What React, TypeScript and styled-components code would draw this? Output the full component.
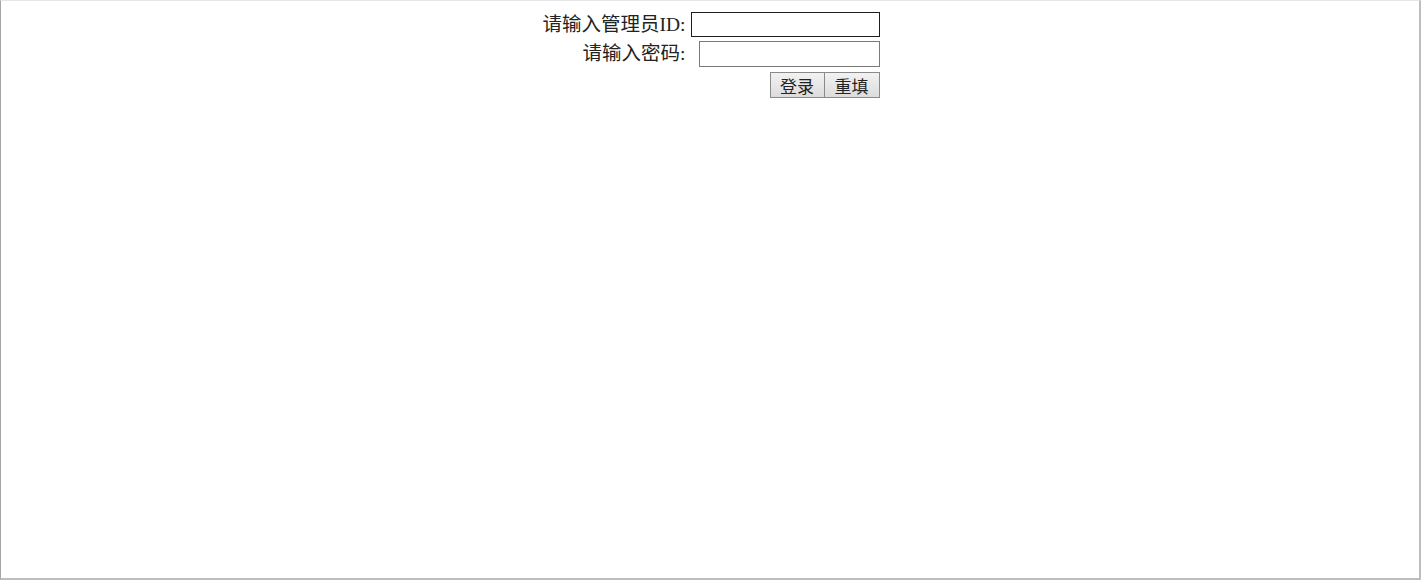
import React from 'react';
import styled, { createGlobalStyle } from 'styled-components';

const GlobalStyle = createGlobalStyle`
  html, body {
    margin: 0;
    padding: 0;
    background: #ffffff;
  }
  body {
    font-family: "Liberation Serif", "Noto Sans CJK SC", serif;
  }
`;

const Frame = styled.div`
  box-sizing: border-box;
  width: 1421px;
  height: 580px;
  border: 1px solid #a6a6a6;
  border-top-color: #e6e6e6;
  border-right-width: 2px;
  border-right-color: #bdbdbd;
  border-bottom-width: 2px;
  border-bottom-color: #bdbdbd;
  padding-top: 7px;
`;

const FormTable = styled.table`
  margin: 0 auto;
  position: relative;
  left: 1px;
  border-collapse: separate;
  border-spacing: 0 4px;
`;

const LabelCell = styled.td`
  text-align: right;
  font-size: 19.5px;
  line-height: 24px;
  color: #222;
  white-space: nowrap;
  padding: 0 5px 0 0;
  vertical-align: middle;
`;

const FieldCell = styled.td`
  text-align: right;
  padding: 0;
  line-height: 0;
  vertical-align: middle;
`;

const TextInput = styled.input<{ $wide?: boolean }>`
  box-sizing: border-box;
  display: block;
  margin-left: auto;
  width: ${(p) => (p.$wide ? '189px' : '181px')};
  height: ${(p) => (p.$wide ? '25px' : '26px')};
  border: 1px solid ${(p) => (p.$wide ? '#1e1e1e' : '#7a7a7a')};
  outline: none;
  padding: 0 2px;
  font-size: 16px;
  font-family: "Liberation Serif", "Noto Sans CJK SC", serif;
  background: #fff;
`;

const ButtonRow = styled.div`
  display: flex;
  justify-content: flex-end;
  padding-top: 1px;
`;

const FormButton = styled.button`
  box-sizing: border-box;
  width: 55px;
  height: 26px;
  padding: 0;
  border: 1px solid #8a8a8a;
  border-radius: 0;
  background: linear-gradient(#f2f2f2, #dcdcdc);
  font-size: 17px;
  color: #222;
  font-family: "Noto Sans CJK SC", sans-serif;
  line-height: 1;
  & + & {
    border-left: 0;
  }
`;

const App: React.FC = () => {
  return (
    <>
      <GlobalStyle />
      <Frame>
        <form onSubmit={(e) => e.preventDefault()}>
          <FormTable>
            <tbody>
              <tr>
                <LabelCell>请输入管理员ID:</LabelCell>
                <FieldCell>
                  <TextInput $wide autoFocus type="text" />
                </FieldCell>
              </tr>
              <tr>
                <LabelCell>请输入密码:</LabelCell>
                <FieldCell>
                  <TextInput type="password" />
                </FieldCell>
              </tr>
              <tr>
                <td />
                <FieldCell>
                  <ButtonRow>
                    <FormButton type="submit">登录</FormButton>
                    <FormButton type="reset">重填</FormButton>
                  </ButtonRow>
                </FieldCell>
              </tr>
            </tbody>
          </FormTable>
        </form>
      </Frame>
    </>
  );
};

export default App;
